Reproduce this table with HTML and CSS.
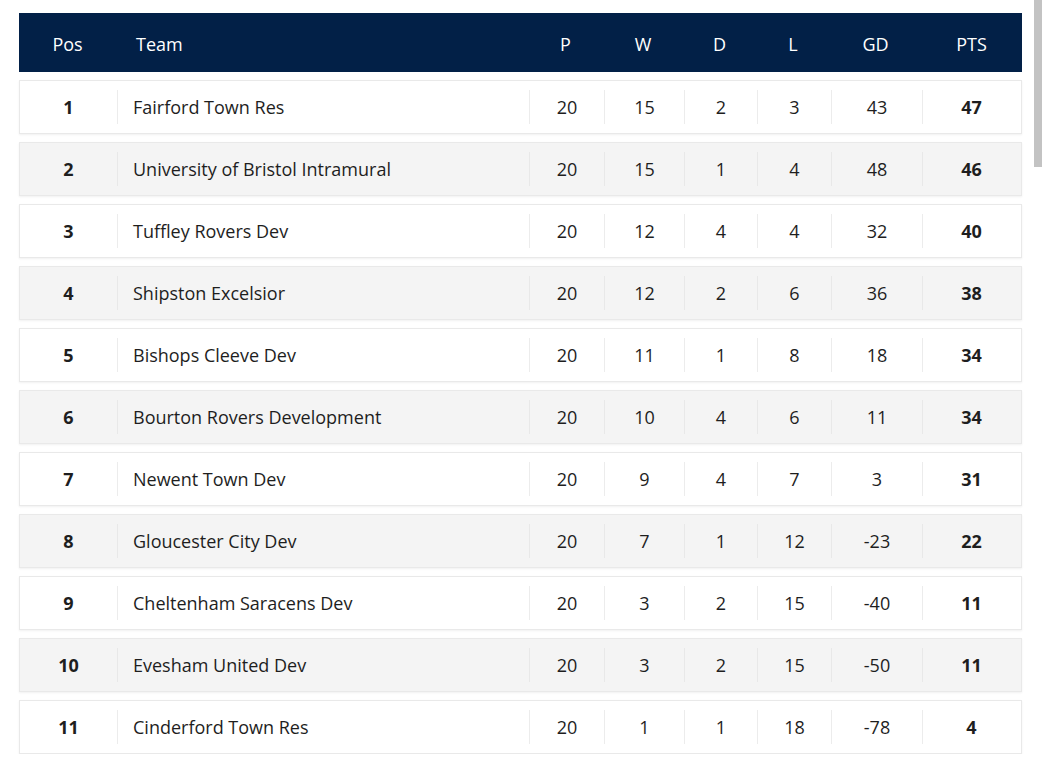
FILE: index.html
```html
<!DOCTYPE html>
<html lang="en">
<head>
<meta charset="utf-8">
<title>League Table</title>
<link rel="stylesheet" href="styles.css">
</head>
<body>
<div class="page">
  <div class="table">
    <div class="row head">
      <div class="c pos">Pos</div>
      <div class="c team">Team</div>
      <div class="c">P</div>
      <div class="c">W</div>
      <div class="c">D</div>
      <div class="c">L</div>
      <div class="c">GD</div>
      <div class="c">PTS</div>
    </div>
    <div class="row"><div class="c pos">1</div><div class="c team">Fairford Town Res</div><div class="c">20</div><div class="c">15</div><div class="c">2</div><div class="c">3</div><div class="c">43</div><div class="c pts">47</div></div>
    <div class="row alt"><div class="c pos">2</div><div class="c team">University of Bristol Intramural</div><div class="c">20</div><div class="c">15</div><div class="c">1</div><div class="c">4</div><div class="c">48</div><div class="c pts">46</div></div>
    <div class="row"><div class="c pos">3</div><div class="c team">Tuffley Rovers Dev</div><div class="c">20</div><div class="c">12</div><div class="c">4</div><div class="c">4</div><div class="c">32</div><div class="c pts">40</div></div>
    <div class="row alt"><div class="c pos">4</div><div class="c team">Shipston Excelsior</div><div class="c">20</div><div class="c">12</div><div class="c">2</div><div class="c">6</div><div class="c">36</div><div class="c pts">38</div></div>
    <div class="row"><div class="c pos">5</div><div class="c team">Bishops Cleeve Dev</div><div class="c">20</div><div class="c">11</div><div class="c">1</div><div class="c">8</div><div class="c">18</div><div class="c pts">34</div></div>
    <div class="row alt"><div class="c pos">6</div><div class="c team">Bourton Rovers Development</div><div class="c">20</div><div class="c">10</div><div class="c">4</div><div class="c">6</div><div class="c">11</div><div class="c pts">34</div></div>
    <div class="row"><div class="c pos">7</div><div class="c team">Newent Town Dev</div><div class="c">20</div><div class="c">9</div><div class="c">4</div><div class="c">7</div><div class="c">3</div><div class="c pts">31</div></div>
    <div class="row alt"><div class="c pos">8</div><div class="c team">Gloucester City Dev</div><div class="c">20</div><div class="c">7</div><div class="c">1</div><div class="c">12</div><div class="c">-23</div><div class="c pts">22</div></div>
    <div class="row"><div class="c pos">9</div><div class="c team">Cheltenham Saracens Dev</div><div class="c">20</div><div class="c">3</div><div class="c">2</div><div class="c">15</div><div class="c">-40</div><div class="c pts">11</div></div>
    <div class="row alt"><div class="c pos">10</div><div class="c team">Evesham United Dev</div><div class="c">20</div><div class="c">3</div><div class="c">2</div><div class="c">15</div><div class="c">-50</div><div class="c pts">11</div></div>
    <div class="row"><div class="c pos">11</div><div class="c team">Cinderford Town Res</div><div class="c">20</div><div class="c">1</div><div class="c">1</div><div class="c">18</div><div class="c">-78</div><div class="c pts">4</div></div>
  </div>
</div>
<div class="scroll-thumb"></div>
</body>
</html>
```
FILE: styles.css
```css
html, body {
  margin: 0;
  padding: 0;
  background: #ffffff;
  overflow: hidden;
}
body {
  font-family: "Open Sans", "Noto Sans", "Liberation Sans", sans-serif;
  color: #1e1e1e;
  font-size: 18px;
}
.page {
  padding: 13px 0 0 19px;
}
.table {
  width: 1003px;
  display: flex;
  flex-direction: column;
  gap: 8px;
}
.row {
  display: grid;
  grid-template-columns: 97px 412px 75px 80px 73px 74px 91px 101px;
  height: 54px;
  box-sizing: border-box;
  background: #ffffff;
  border: 1px solid #e9e9e9;
  box-shadow: 0 1px 2px rgba(0, 0, 0, 0.06);
}
.row.alt {
  background: #f4f4f4;
}
.row.head {
  height: 59px;
  background: #022047;
  border: none;
  box-shadow: none;
  color: #ffffff;
  font-size: 18px;
}
.c {
  display: flex;
  align-items: center;
  justify-content: center;
  margin: 9px 0;
  border-left: 1px solid #ececec;
}
.row.alt .c {
  border-left-color: #e8e8e8;
}
.c.pos {
  border-left: none;
  font-weight: 700;
}
.c.team {
  justify-content: flex-start;
  padding-left: 15px;
}
.c.pts {
  font-weight: 700;
  padding-right: 3px;
}
.row.head .c {
  border-left: none;
  font-weight: 400;
  padding-top: 3px;
}
.row.head .c.team {
  padding-left: 20px;
}
.scroll-thumb {
  position: fixed;
  top: 0;
  right: 0;
  width: 8px;
  height: 167px;
  background: #c3c3c3;
}
```
